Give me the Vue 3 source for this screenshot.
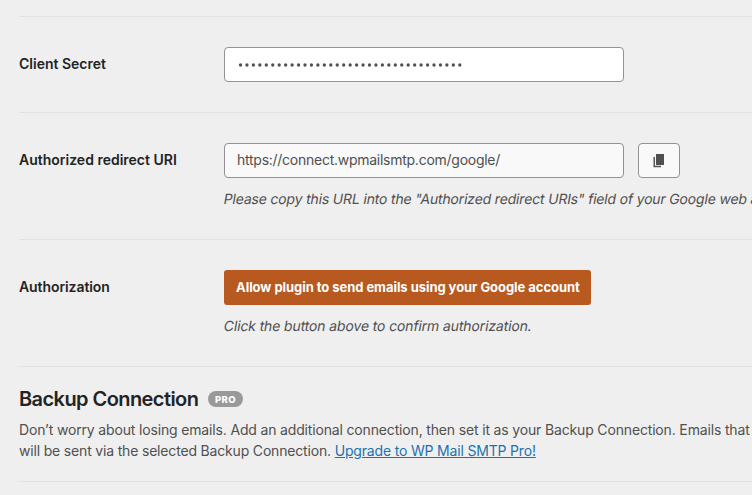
<script setup>
const secretLength = 35
const redirectUri = 'https://connect.wpmailsmtp.com/google/'
</script>

<template>
  <main class="settings">
    <section class="row">
      <div class="label"><span class="label-secret">Client Secret</span></div>
      <div class="field">
        <div class="input secret" aria-label="Client Secret">
          <svg class="dots" width="230" height="6" viewBox="0 0 230 6">
            <circle v-for="n in secretLength" :key="n" :cx="2.5 + (n - 1) * 6.45" cy="3" r="1.65" />
          </svg>
        </div>
      </div>
    </section>

    <section class="row">
      <div class="label"><span class="label-uri">Authorized redirect URI</span></div>
      <div class="field">
        <div class="controls">
          <div class="input readonly"><span class="uri">{{ redirectUri }}</span></div>
          <button class="copy" type="button" aria-label="Copy">
            <svg width="12" height="14" viewBox="0 0 12 14">
              <path d="M0.5 3H2V11.7H8V13.2H0.5Z" fill="#555" />
              <rect x="3" y="0" width="8" height="11" fill="#505050" />
            </svg>
          </button>
        </div>
        <p class="desc"><span>Please copy this URL into the "Authorized redirect URIs" field of your Google web a</span></p>
      </div>
    </section>

    <section class="row">
      <div class="label"><span class="label-auth">Authorization</span></div>
      <div class="field">
        <button class="allow" type="button"><span>Allow plugin to send emails using your Google account</span></button>
        <p class="desc desc-auth"><span>Click the button above to confirm authorization.</span></p>
      </div>
    </section>

    <section class="backup">
      <h2><span class="title">Backup Connection</span><span class="badge">PRO</span></h2>
      <p>
        <span class="line-one">Don’t worry about losing emails. Add an additional connection, then set it as your Backup Connection. Emails that</span><br>
        <span class="line-two">will be sent via the selected Backup Connection. </span><a class="upgrade" href="#">Upgrade to WP Mail SMTP Pro!</a>
      </p>
    </section>
  </main>
</template>

<style>
body {
  margin: 0;
  overflow: hidden;
  background: #efefef;
}
</style>

<style scoped>
.settings {
  box-sizing: border-box;
  height: 495px;
  padding: 16px 0 0 19px;
  overflow: hidden;
  background: #efefef;
  color: #50504f;
  font-family: Inter, "Liberation Sans", sans-serif;
  font-size: 14px;
  line-height: 21px;
  white-space: nowrap;
}
.row {
  display: flex;
  padding: 30px 0;
  border-top: 1px solid #e2e2e2;
}
.label {
  flex: 0 0 205px;
  padding-top: 7px;
  color: #232323;
  font-weight: 600;
  line-height: 20px;
}
.label-auth {
  letter-spacing: -0.08px;
}
.field {
  flex: 1;
  min-width: 0;
}
.controls {
  display: flex;
  gap: 14px;
}
.input {
  box-sizing: border-box;
  display: flex;
  align-items: center;
  width: 400px;
  height: 35px;
  padding: 0 12px;
  border: 1px solid #939393;
  border-radius: 4px;
  background: #fff;
}
.secret {
  padding-left: 13px;
}
.dots {
  fill: #505050;
}
.readonly {
  padding-bottom: 2px;
  background: #f9f9f9;
}
.uri {
  letter-spacing: -0.26px;
}
.copy {
  box-sizing: border-box;
  display: flex;
  align-items: center;
  justify-content: center;
  width: 42px;
  height: 35px;
  padding: 0;
  border: 1px solid #939393;
  border-radius: 4px;
  background: #f9f9f9;
}
.desc {
  margin: 10px 0 0;
  letter-spacing: -0.175px;
}
.desc-auth {
  letter-spacing: -0.13px;
}
/* Slanted upright letterforms keep the two-storey "a". */
.desc span {
  display: inline-block;
  transform: skewX(-10deg);
}
.allow {
  display: block;
  width: 367px;
  height: 35px;
  padding: 0 12px;
  border: 0;
  border-radius: 3px;
  background: #b85a1f;
  color: #fff;
  font: 700 13px/35px Inter, sans-serif;
  letter-spacing: -0.05px;
  text-align: left;
  white-space: nowrap;
}
.backup {
  height: 114px;
  border-top: 1px solid #e2e2e2;
  border-bottom: 1px solid #e2e2e2;
}
h2 {
  display: flex;
  align-items: center;
  margin: 20px 0 8px;
  color: #232323;
  font-size: 20px;
  font-weight: 600;
  line-height: 24px;
}
.title {
  width: 179px;
  letter-spacing: -0.57px;
}
.badge {
  width: 35px;
  height: 16px;
  margin-left: 10px;
  border-radius: 8px;
  background: #999;
  color: #fff;
  font-size: 9.5px;
  font-weight: 800;
  letter-spacing: 0.4px;
  line-height: 17px;
  text-align: center;
}
.backup p {
  margin: 0;
  letter-spacing: -0.175px;
}
.backup .line-one {
  letter-spacing: -0.16px;
}
.upgrade {
  color: #1a73b0;
  text-decoration: underline;
}
</style>
